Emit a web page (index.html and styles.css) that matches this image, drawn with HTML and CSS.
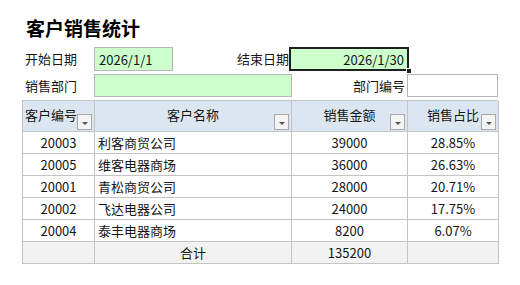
FILE: index.html
```html
<!DOCTYPE html>
<html lang="zh-CN">
<head>
<meta charset="utf-8">
<title>客户销售统计</title>
<link rel="stylesheet" href="styles.css">
</head>
<body>
<div class="sheet">
  <h1 class="title">客户销售统计</h1>

  <div class="form-row row1">
    <div class="label">开始日期</div>
    <div class="c2">
      <div class="input green start">2026/1/1</div>
      <div class="label right">结束日期</div>
    </div>
    <div class="input green selected num-right">2026/1/30<span class="handle"></span></div>
  </div>

  <div class="form-row row2">
    <div class="label">销售部门</div>
    <div class="input green"></div>
    <div class="label right">部门编号</div>
    <div class="input white"></div>
  </div>

  <div class="table">
    <div class="th first">客户编号<span class="filter"></span></div>
    <div class="th">客户名称<span class="filter"></span></div>
    <div class="th">销售金额<span class="filter"></span></div>
    <div class="th">销售占比<span class="filter"></span></div>

    <div class="td center">20003</div><div class="td left">利客商贸公司</div><div class="td center">39000</div><div class="td center">28.85%</div>
    <div class="td center">20005</div><div class="td left">维客电器商场</div><div class="td center">36000</div><div class="td center">26.63%</div>
    <div class="td center">20001</div><div class="td left">青松商贸公司</div><div class="td center">28000</div><div class="td center">20.71%</div>
    <div class="td center">20002</div><div class="td left">飞达电器公司</div><div class="td center">24000</div><div class="td center">17.75%</div>
    <div class="td center">20004</div><div class="td left">泰丰电器商场</div><div class="td center">8200</div><div class="td center">6.07%</div>

    <div class="td total"></div><div class="td total center">合计</div><div class="td total center">135200</div><div class="td total"></div>
  </div>
</div>
</body>
</html>
```

FILE: styles.css
```css
* { box-sizing: border-box; }
html, body { margin: 0; padding: 0; background: #fff; }
body {
  font-family: "Noto Sans CJK SC", "Noto Sans", sans-serif;
  font-size: 13px;
  color: #151515;
}
.sheet {
  width: 520px;
  height: 285px;
  padding: 15px 0 0 22px;
}
.title {
  margin: 0 0 0 4px;
  font-size: 19px;
  font-weight: 700;
  line-height: 26px;
  color: #000;
}
.form-row {
  display: grid;
  grid-template-columns: 72px 197px 116px 91px;
  align-items: stretch;
}
.row1 { margin-top: 6px; height: 24px; }
.row2 { margin-top: 3px; height: 23px; }
.label {
  display: flex;
  align-items: center;
  padding-left: 3px;
  line-height: 20px;
}
.label.right { justify-content: flex-end; padding: 0 2px 0 0; }
.c2 {
  display: flex;
  justify-content: space-between;
}
.input {
  position: relative;
  display: flex;
  align-items: center;
  padding: 0 4px;
  border: 1px solid #b5b5b5;
}
.green { background: #ccffcc; }
.white { background: #fff; }
.start { width: 79px; }
.num-right { justify-content: flex-end; padding-right: 3px; }
.selected {
  border: 2px solid #1f1f1f;
  margin-left: -2px;
  margin-right: -2px;
}
.handle {
  position: absolute;
  right: -5px;
  bottom: -5px;
  width: 6px;
  height: 6px;
  background: #1f1f1f;
  border: 1px solid #fff;
}
.row2 .green { margin-right: -1px; }

.table {
  margin-top: 3px;
  display: grid;
  grid-template-columns: 72px 197px 116px 91px;
  grid-template-rows: 31px repeat(6, 22px);
  border-top: 1px solid #c4c4c4;
  border-left: 1px solid #c4c4c4;
  width: 476px;
}
.th, .td {
  border-right: 1px solid #c4c4c4;
  border-bottom: 1px solid #c4c4c4;
  display: flex;
  align-items: center;
  white-space: nowrap;
}
.th {
  position: relative;
  background: #dce6f1;
  justify-content: center;
  padding-bottom: 4px;
}
.th.first { justify-content: flex-start; padding-left: 2px; }
.filter {
  position: absolute;
  right: 2px;
  bottom: 1px;
  width: 15px;
  height: 16px;
  background: #f4f4f4;
  border: 1px solid #a9a9a9;
}
.filter::after {
  content: "";
  position: absolute;
  left: 4px;
  top: 7px;
  border-left: 3px solid transparent;
  border-right: 3px solid transparent;
  border-top: 3px solid #555;
}
.td { background: #fff; }
.center { justify-content: center; }
.left { justify-content: flex-start; padding-left: 3px; }
.total { background: #f2f2f2; }
```
